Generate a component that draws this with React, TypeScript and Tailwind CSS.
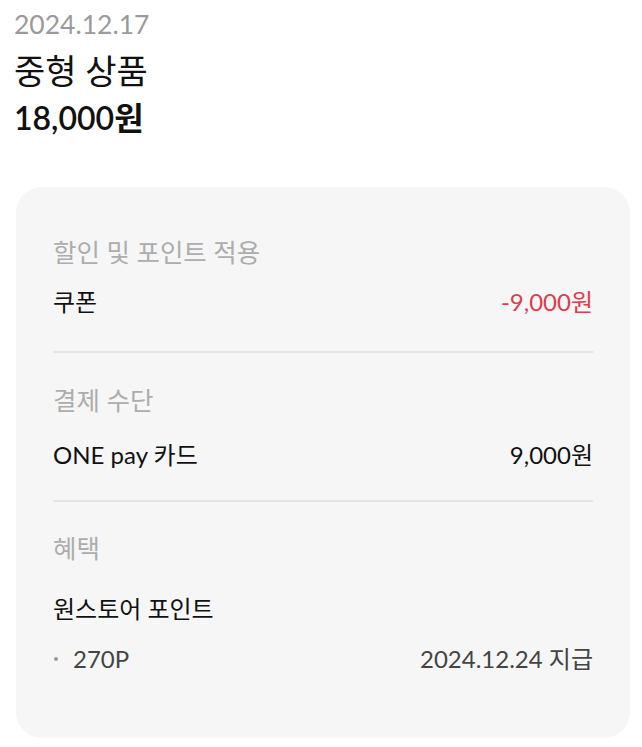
import React from "react";

const font = { fontFamily: '"Lato", "Noto Sans CJK KR", sans-serif' };

export default function App() {
  return (
    <div className="w-[642px] min-h-[747px] bg-white" style={font}>
      <div className="pl-[14px] pt-[8px]">
        <div className="text-[26.5px] leading-[32px] text-[#9a9a9a]">2024.12.17</div>
        <div className="mt-[12px] text-[34px] leading-[38px] text-[#111]">중형 상품</div>
        <div className="mt-[9px] text-[32px] leading-[38px] font-semibold text-[#111]">18,000원</div>
      </div>
      <div className="ml-[16px] mr-[12px] mt-[50px] rounded-[26px] bg-[#f6f6f6] px-[37px] pt-[49px] pb-[63px]">
        <div className="text-[25.5px] leading-[32px] text-[#adadad]">할인 및 포인트 적용</div>
        <div className="mt-[18px] flex justify-between text-[24px] leading-[32px] text-[#111]">
          <span>쿠폰</span>
          <span className="text-[#e03c4c]">-9,000원</span>
        </div>
        <div className="mt-[33px] h-[2px] bg-[#e4e4e4]" />
        <div className="mt-[31px] text-[25.5px] leading-[32px] text-[#adadad]">결제 수단</div>
        <div className="mt-[23px] flex justify-between text-[24px] leading-[32px] text-[#111]">
          <span>ONE pay 카드</span>
          <span>9,000원</span>
        </div>
        <div className="mt-[29px] h-[2px] bg-[#e4e4e4]" />
        <div className="mt-[30px] text-[25.5px] leading-[32px] text-[#adadad]">혜택</div>
        <div className="mt-[29px] text-[24px] leading-[32px] text-[#111]">원스토어 포인트</div>
        <div className="mt-[18px] flex items-center justify-between text-[24px] leading-[32px] text-[#444]">
          <div className="flex items-center">
            <span className="ml-[1px] h-[4px] w-[4px] rounded-full bg-[#9a9a9a]" />
            <span className="ml-[15px]">270P</span>
          </div>
          <span>2024.12.24 지급</span>
        </div>
      </div>
    </div>
  );
}
